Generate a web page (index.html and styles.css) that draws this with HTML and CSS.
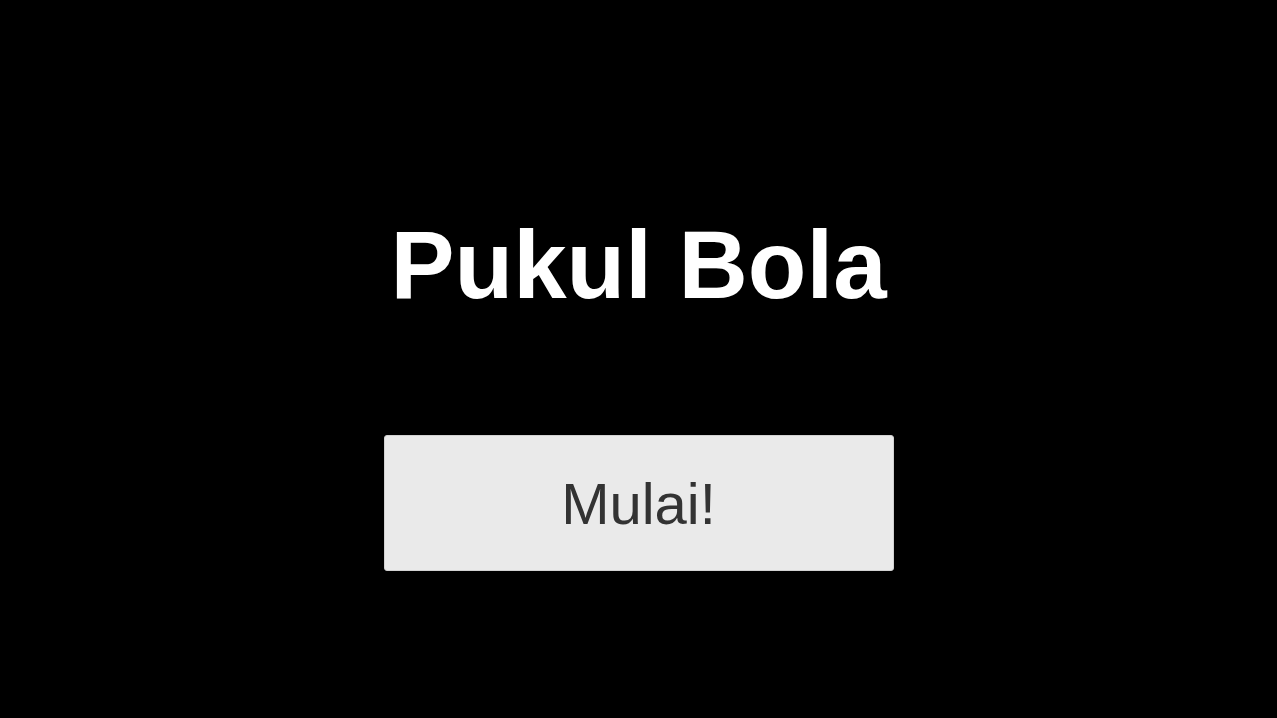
FILE: index.html
```html
<!DOCTYPE html>
<html>
<head>
<meta charset="utf-8">
<link rel="stylesheet" href="styles.css">
</head>
<body>
<main class="screen">
  <h1 class="title">Pukul Bola</h1>
  <button class="start">Mulai!</button>
</main>
</body>
</html>
```

FILE: styles.css
```css
html, body {
  margin: 0;
  padding: 0;
  background: #000;
  height: 100%;
}
.screen {
  height: 718px;
  display: flex;
  flex-direction: column;
  align-items: center;
  font-family: "Liberation Sans", Arial, sans-serif;
}
.title {
  margin: 0;
  margin-top: 210px;
  font-size: 96px;
  line-height: 110px;
  font-weight: bold;
  color: #fff;
}
.start {
  margin-top: 115px;
  width: 510px;
  height: 136px;
  background: #eaeaea;
  border: 1px solid #d2d2d2;
  border-radius: 3px;
  color: #333;
  font-family: "Liberation Sans", Arial, sans-serif;
  font-size: 58px;
  padding: 0;
}
```
